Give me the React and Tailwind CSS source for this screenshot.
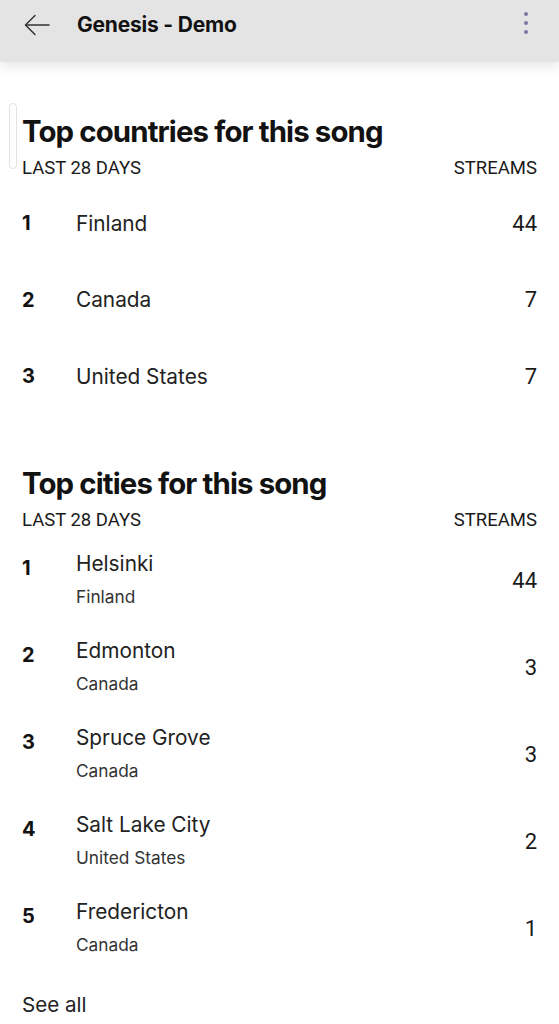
const countries = [
  { rank: 1, name: "Finland", streams: 44 },
  { rank: 2, name: "Canada", streams: 7 },
  { rank: 3, name: "United States", streams: 7 },
];

const cities = [
  { rank: 1, name: "Helsinki", country: "Finland", streams: 44 },
  { rank: 2, name: "Edmonton", country: "Canada", streams: 3 },
  { rank: 3, name: "Spruce Grove", country: "Canada", streams: 3 },
  { rank: 4, name: "Salt Lake City", country: "United States", streams: 2 },
  { rank: 5, name: "Fredericton", country: "Canada", streams: 1 },
];

function SectionHeader({ title, className = "" }) {
  return (
    <div className={className}>
      <h2 className="text-[29.4px] font-bold leading-[36px] tracking-[-0.03em] text-[#121212]">{title}</h2>
      <div className="mt-[7px] flex items-center justify-between font-['Roboto',sans-serif] text-[18.5px] leading-[22px] text-[#1a1a1a]">
        <span>LAST 28 DAYS</span>
        <span>STREAMS</span>
      </div>
    </div>
  );
}

export default function App() {
  return (
    <div className="relative min-h-[1024px] bg-white font-['Inter',sans-serif] text-[#121212]">
      <header className="relative z-10 flex h-[62px] items-center bg-[#e4e4e4] pb-[12px] pl-[24px] pr-[31px] shadow-[0_4px_12px_rgba(0,0,0,0.10)]">
        <svg width="26" height="22" viewBox="0 0 26 22" fill="none" stroke="#333" strokeWidth="1.5" strokeLinecap="round" strokeLinejoin="round">
          <path d="M25 11H2" />
          <path d="M11 1.5L1.5 11L11 20.5" />
        </svg>
        <span className="ml-[27px] text-[21px] font-bold tracking-[-0.01em] text-[#121212]">Genesis - Demo</span>
        <div className="ml-auto -mt-[5px] flex flex-col items-center gap-[5px]">
          <span className="h-[4px] w-[4px] rounded-full bg-[#7b76a6]" />
          <span className="h-[4px] w-[4px] rounded-full bg-[#7b76a6]" />
          <span className="h-[4px] w-[4px] rounded-full bg-[#7b76a6]" />
        </div>
      </header>

      <div className="absolute left-[9px] top-[103px] h-[66px] w-[8px] rounded-[4px] border border-[#e2e2e2]" />

      <main className="px-[22px]">
        <SectionHeader title="Top countries for this song" className="pt-[52px]" />
        <ul className="mt-[6px]">
          {countries.map((c) => (
            <li key={c.rank} className="flex h-[76.5px] items-center">
              <span className="w-[54px] text-[20px] font-bold">{c.rank}</span>
              <span className="flex-1 text-[20.8px] text-[#222]">{c.name}</span>
              <span className="font-['Roboto',sans-serif] text-[22px] text-[#1a1a1a]">{c.streams}</span>
            </li>
          ))}
        </ul>

        <SectionHeader title="Top cities for this song" className="pt-[51px]" />
        <ul className="mt-[6px]">
          {cities.map((c) => (
            <li key={c.rank} className="flex h-[87px] items-center">
              <span className="w-[54px] self-center pt-[8px] pb-[33px] text-[20px] font-bold leading-[26px]">{c.rank}</span>
              <div className="flex flex-1 flex-col">
                <span className="text-[20.8px] leading-[26px] text-[#222]">{c.name}</span>
                <span className="mt-[7px] text-[17.3px] leading-[26px] text-[#333]">{c.country}</span>
              </div>
              <span className="font-['Roboto',sans-serif] text-[22px] text-[#1a1a1a]">{c.streams}</span>
            </li>
          ))}
        </ul>

        <div className="mt-[20px] text-[20.6px] leading-[26px] text-[#222]">See all</div>
      </main>
    </div>
  );
}
